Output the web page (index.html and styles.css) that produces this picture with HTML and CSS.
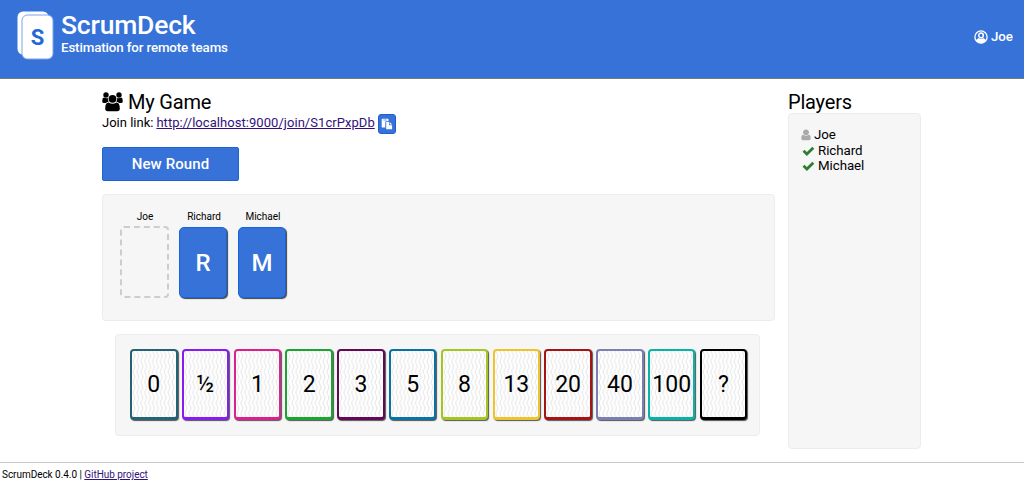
FILE: index.html
```html
<!DOCTYPE html>
<html lang="en">
<head>
<meta charset="utf-8">
<title>ScrumDeck</title>
<link rel="stylesheet" href="styles.css">
</head>
<body>
<svg class="defs" width="0" height="0" aria-hidden="true">
  <defs>
    <pattern id="wave" width="3.9" height="10.4" patternUnits="userSpaceOnUse">
      <path d="M1 0C1 2.6 2.9 2.6 2.9 5.2S1 7.8 1 10.4" fill="none" stroke="#dedede" stroke-width=".9"/>
    </pattern>
  </defs>
</svg>
<header class="header">
  <svg class="logo" width="38" height="50" viewBox="0 0 38 50">
    <rect x=".5" y=".5" width="31" height="43" rx="5.5" fill="#fff"/>
    <rect x="5" y="4" width="31" height="44" rx="5.5" fill="#fff" stroke="#7ba3ea" stroke-width="1"/>
    <text class="logo-letter" x="20.5" y="34" text-anchor="middle">S</text>
  </svg>
  <div class="brand">
    <div class="brand-name">ScrumDeck</div>
    <div class="brand-tag">Estimation for remote teams</div>
  </div>
  <div class="user">
    <svg width="14" height="14" viewBox="0 0 14 14"><circle cx="7" cy="7" r="6.1" fill="none" stroke="#fff" stroke-width="1.3"/><circle cx="7" cy="5.4" r="2.3" fill="none" stroke="#fff" stroke-width="1.5"/><path d="M2.300 10.800C2.600 8.800 4 8.300 5.300 8.300Q7 9.300 8.700 8.300C10 8.300 11.400 8.800 11.700 10.800Q9.800 13.300 7 13.300T2.300 10.800Z" fill="#fff"/></svg>
    <span>Joe</span>
  </div>
</header>
<main class="main">
  <section class="game">
    <h1 class="title">
      <svg width="21" height="20" viewBox="0 0 21 20"><circle cx="4" cy="3" r="2.7"/><circle cx="17" cy="3" r="2.7"/><path d="M.3 9.8V8.2Q.3 5.6 2 5.6Q4 6.8 6 6Q5.5 8.3 6.7 9.8Q5 9.9 4 11H2Q.3 11 .3 9.8ZM20.7 9.8V8.2Q20.7 5.6 19 5.6Q17 6.8 15 6Q15.5 8.3 14.3 9.8Q16 9.9 17 11H19Q20.7 11 20.7 9.8Z"/><circle cx="10.5" cy="6.8" r="3.9"/><path d="M3.2 16.5Q3.2 10.5 6.5 10.5Q10.5 13 14.5 10.5Q17.8 10.5 17.8 16.5Q17.8 19.2 15.300 19.200H5.700Q3.200 19.200 3.200 16.500Z"/></svg>
      <span>My Game</span>
    </h1>
    <div class="join">
      <span class="join-label">Join link:</span>
      <a class="join-link" href="#">http://localhost:9000/join/S1crPxpDb</a>
      <button class="copy" aria-label="Copy"><svg width="12" height="12" viewBox="0 0 12 12"><path d="M.7 1.300Q.7 .8 1.200 .8H7Q7.500 .8 7.500 1.300V3.200H5.200Q4.300 3.200 4.300 4.100V9.500H1.200Q.7 9.500 .7 9Z" fill="#fff"/><path d="M5.200 4.100H8V7.200H11.100V11.300H5.200ZM8.700 4.100L11.100 6.500H8.700Z" fill="#fff"/><path d="M2.400 2H5.800" stroke="#3672d8" stroke-width=".7"/></svg></button>
    </div>
    <button class="new-round">New Round</button>
    <div class="panel table">
      <div class="seat"><div class="seat-name">Joe</div><div class="slot"></div></div>
      <div class="seat"><div class="seat-name">Richard</div><div class="back">R</div></div>
      <div class="seat"><div class="seat-name">Michael</div><div class="back">M</div></div>
    </div>
    <div class="panel deck">
      <div class="card c0"><svg class="waves"><rect width="100%" height="100%" fill="url(#wave)"/></svg><span>0</span></div>
      <div class="card chalf"><svg class="waves"><rect width="100%" height="100%" fill="url(#wave)"/></svg><span>½</span></div>
      <div class="card c1"><svg class="waves"><rect width="100%" height="100%" fill="url(#wave)"/></svg><span>1</span></div>
      <div class="card c2"><svg class="waves"><rect width="100%" height="100%" fill="url(#wave)"/></svg><span>2</span></div>
      <div class="card c3"><svg class="waves"><rect width="100%" height="100%" fill="url(#wave)"/></svg><span>3</span></div>
      <div class="card c5"><svg class="waves"><rect width="100%" height="100%" fill="url(#wave)"/></svg><span>5</span></div>
      <div class="card c8"><svg class="waves"><rect width="100%" height="100%" fill="url(#wave)"/></svg><span>8</span></div>
      <div class="card c13"><svg class="waves"><rect width="100%" height="100%" fill="url(#wave)"/></svg><span>13</span></div>
      <div class="card c20"><svg class="waves"><rect width="100%" height="100%" fill="url(#wave)"/></svg><span>20</span></div>
      <div class="card c40"><svg class="waves"><rect width="100%" height="100%" fill="url(#wave)"/></svg><span>40</span></div>
      <div class="card c100"><svg class="waves"><rect width="100%" height="100%" fill="url(#wave)"/></svg><span>100</span></div>
      <div class="card cq"><svg class="waves"><rect width="100%" height="100%" fill="url(#wave)"/></svg><span>?</span></div>
    </div>
  </section>
  <aside class="players">
    <h2 class="title">Players</h2>
    <ul class="panel list">
      <li class="waiting"><svg width="10" height="12" viewBox="0 0 10 12"><circle cx="5" cy="3.3" r="2.9" fill="#aaa"/><path d="M.3 9.5Q.3 5.8 2.2 5.8Q5 7.6 7.8 5.8Q9.700 5.800 9.700 9.500Q9.700 11.300 8 11.300H2Q.3 11.300 .3 9.500Z" fill="#aaa"/></svg>Joe</li>
      <li><svg width="13" height="10" viewBox="0 0 13 10"><path d="M1.500 4.700L4.900 8L11.300 1.700" fill="none" stroke="#2f7d32" stroke-width="2.800"/></svg>Richard</li>
      <li><svg width="13" height="10" viewBox="0 0 13 10"><path d="M1.500 4.700L4.900 8L11.300 1.700" fill="none" stroke="#2f7d32" stroke-width="2.800"/></svg>Michael</li>
    </ul>
  </aside>
</main>
<footer class="footer">ScrumDeck 0.4.0 | <a href="#">GitHub project</a></footer>
</body>
</html>
```
FILE: styles.css
```css
* { box-sizing: border-box; }
body {
  margin: 0;
  height: 489px;
  overflow: hidden;
  display: flex;
  flex-direction: column;
  background: #fff;
  color: #000;
  font-family: Roboto, "Liberation Sans", sans-serif;
}
.defs { position: absolute; }
svg { display: block; flex: none; }
.header {
  height: 79px;
  flex: none;
  display: flex;
  align-items: flex-start;
  padding: 11px 11px 0 17px;
  background: #3672d8;
  border-bottom: 1px solid #777d7c;
  color: #fff;
}
.logo-letter { font-size: 22px; font-weight: 700; fill: #2468d8; }
.brand { margin-left: 6px; font-weight: 500; }
.brand-name { font-size: 26.5px; line-height: 28px; letter-spacing: -.2px; }
.brand-tag { font-size: 13.3px; line-height: 18px; letter-spacing: -.12px; }
.user {
  margin: 17px 0 0 auto;
  display: flex;
  align-items: center;
  gap: 3px;
  font-size: 13.3px;
  font-weight: 500;
  line-height: 18px;
}
.main {
  height: 383px;
  flex: none;
  display: flex;
  gap: 13px;
  padding: 12px 0 0 102px;
}
.game { width: 673px; }
.players { width: 133px; }
.title {
  height: 22px;
  margin: 0;
  display: flex;
  align-items: center;
  gap: 5px;
  font-size: 20px;
  font-weight: 400;
  line-height: 22px;
  letter-spacing: -.2px;
}
.join {
  height: 20px;
  margin-top: 1px;
  display: flex;
  align-items: center;
  font-size: 13px;
  line-height: 18px;
}
.join-link { margin: 0 0 2px 3px; letter-spacing: .05px; }
.join-label { margin-bottom: 2px; }
a { color: #32127a; }
.copy {
  width: 18px;
  height: 20px;
  margin-left: 3px;
  padding: 0;
  display: flex;
  align-items: center;
  justify-content: center;
  border: 1px solid #1f5fd0;
  border-radius: 3px;
  background: #3672d8;
}
.new-round {
  display: block;
  width: 137px;
  height: 34px;
  margin: 13px 0;
  padding: 0;
  border: 1px solid #1f62d2;
  border-radius: 2px;
  background: #3672d8;
  color: #fff;
  font: 500 15px/32px Roboto, sans-serif;
  letter-spacing: .1px;
}
.panel {
  border: 1px solid #ececec;
  border-radius: 4px;
  background: #f6f6f6;
}
.table {
  height: 127px;
  display: flex;
  gap: 10px;
  padding: 15px 17px;
}
.seat { width: 49px; }
.seat-name {
  padding-left: 1px;
  font-size: 10px;
  line-height: 14px;
  text-align: center;
  white-space: nowrap;
}
.slot {
  height: 72px;
  margin-top: 2px;
  border: 2px dashed #cdcdcd;
  border-radius: 4px;
}
.back {
  height: 71px;
  width: 48px;
  margin-top: 3px;
  border: 1px solid #1764d8;
  border-radius: 5px;
  background: #3672d8;
  box-shadow: 1px 1px 1px #444;
  color: #fff;
  font-size: 24px;
  font-weight: 500;
  line-height: 71px;
  text-align: center;
}
.deck {
  width: 645px;
  height: 102px;
  margin: 13px 0 0 13px;
  display: flex;
  gap: 4.3px;
  padding: 14px;
}
.card {
  width: 47.5px;
  height: 71px;
  flex: none;
  display: grid;
  overflow: hidden;
  border: solid;
  border-width: 2px 2px 3px 2px;
  border-radius: 4px;
  background: #fff;
  box-shadow: 1px 1px 1px #555;
}
.card > * { grid-area: 1 / 1; }
.card span {
  place-self: center;
  padding-top: 2px;
  color: #000;
  font-size: 23px;
  line-height: 28px;
}
.waves { width: 100%; height: 100%; }
.c0 { border-color: #246274; }
.chalf { border-color: #861bf5; }
.c1 { border-color: #dc218d; }
.c2 { border-color: #1ba430; }
.c3 { border-color: #610957; }
.c5 { border-color: #0872a5; }
.c8 { border-color: #a5c520; }
.c13 { border-color: #edc42c; }
.c20 { border-color: #a51414; }
.c40 { border-color: #7c80b0; }
.c100 { border-color: #08b3a5; }
.cq { border-color: #000; }
.list {
  height: 336px;
  margin: 0;
  padding: 13px;
  list-style: none;
  font-size: 13.3px;
  line-height: 15.7px;
}
.list li { display: flex; align-items: center; gap: 3px; letter-spacing: -.05px; }
.waiting svg { margin-left: -1px; }
.footer {
  flex: 1;
  padding: 5px 2px;
  border-top: 1px solid #c8c8c8;
  font-size: 10px;
  line-height: 14px;
  letter-spacing: -.04px;
}
```
